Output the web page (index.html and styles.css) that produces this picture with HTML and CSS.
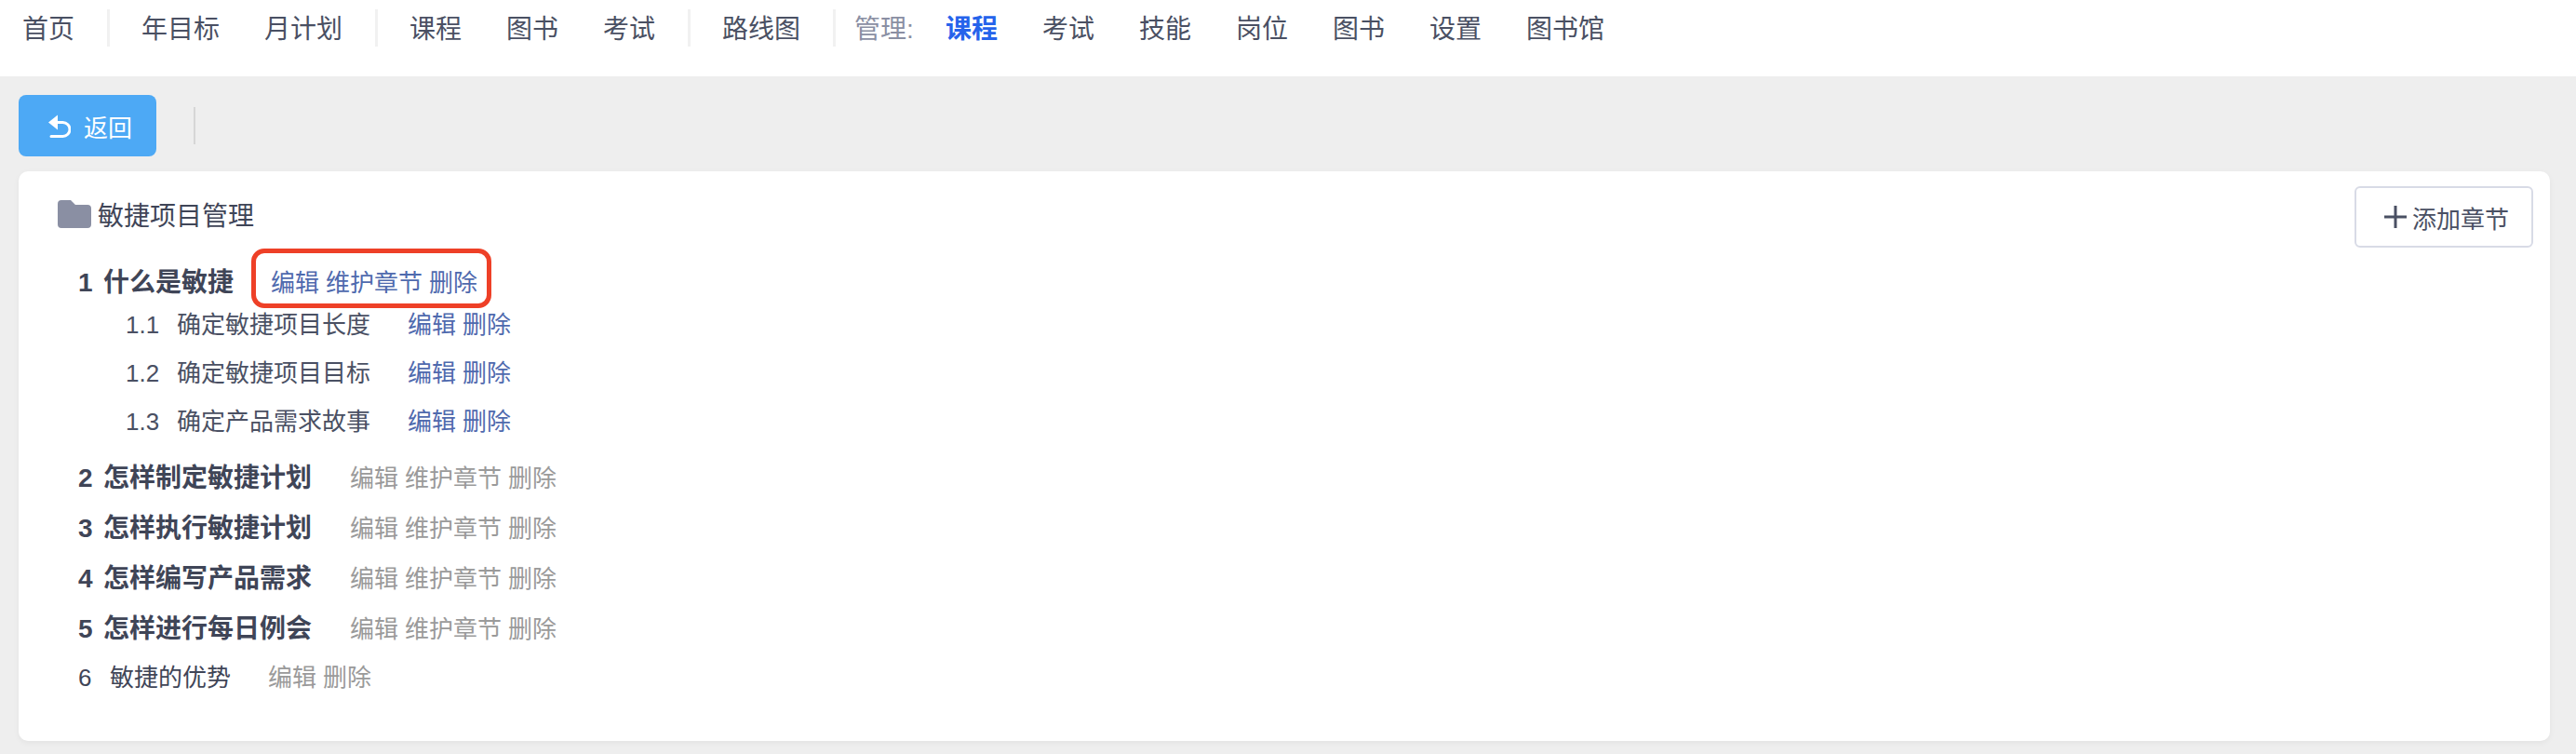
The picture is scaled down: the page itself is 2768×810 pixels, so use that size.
FILE: index.html
```html
<!DOCTYPE html>
<html lang="zh-CN">
<head>
<meta charset="utf-8">
<title>敏捷项目管理</title>
<link rel="stylesheet" href="styles.css">
</head>
<body>
<header class="topnav">
  <a class="nav-item">首页</a>
  <i class="nav-sep"></i>
  <a class="nav-item">年目标</a>
  <a class="nav-item">月计划</a>
  <i class="nav-sep"></i>
  <a class="nav-item">课程</a>
  <a class="nav-item">图书</a>
  <a class="nav-item">考试</a>
  <i class="nav-sep"></i>
  <a class="nav-item">路线图</a>
  <i class="nav-sep"></i>
  <span class="nav-label">管理:</span>
  <a class="nav-item active">课程</a>
  <a class="nav-item">考试</a>
  <a class="nav-item">技能</a>
  <a class="nav-item">岗位</a>
  <a class="nav-item">图书</a>
  <a class="nav-item">设置</a>
  <a class="nav-item">图书馆</a>
</header>

<div class="toolbar">
  <button class="btn-back">
    <svg class="icon-back" viewBox="0 0 24 25" aria-hidden="true">
      <path d="M0 8.5 10 .5v16z" fill="#fff"/>
      <path d="M8 8.5h7.5a7 7 0 0 1 0 15H3" fill="none" stroke="#fff" stroke-width="3" stroke-linecap="round"/>
    </svg>
    <span>返回</span>
  </button>
  <i class="toolbar-sep"></i>
</div>

<main class="card">
  <div class="card-head">
    <div class="course-title">
      <svg class="icon-folder" viewBox="0 0 36 30" aria-hidden="true">
        <path d="M0 4a4 4 0 0 1 4-4h10l5 5h13a4 4 0 0 1 4 4v17a4 4 0 0 1-4 4H4a4 4 0 0 1-4-4z" fill="#8a8fa3"/>
      </svg>
      <span>敏捷项目管理</span>
    </div>
    <button class="btn-add">
      <svg class="icon-plus" viewBox="0 0 24 24" aria-hidden="true">
        <path d="M0 12h24M12 0v24" fill="none" stroke="#4a5063" stroke-width="3"/>
      </svg>
      <span>添加章节</span>
    </button>
  </div>

  <div class="chapter chapter-first">
    <span class="chapter-num">1</span><span class="chapter-name">什么是敏捷</span>
    <span class="links links-on links-marked"><a>编辑</a><a>维护章节</a><a>删除</a></span>
  </div>
  <div class="sections">
    <div class="section">
      <span class="section-num">1.1</span><span class="section-name">确定敏捷项目长度</span>
      <span class="links links-on"><a>编辑</a><a>删除</a></span>
    </div>
    <div class="section">
      <span class="section-num">1.2</span><span class="section-name">确定敏捷项目目标</span>
      <span class="links links-on"><a>编辑</a><a>删除</a></span>
    </div>
    <div class="section">
      <span class="section-num">1.3</span><span class="section-name">确定产品需求故事</span>
      <span class="links links-on"><a>编辑</a><a>删除</a></span>
    </div>
  </div>
  <div class="chapter">
    <span class="chapter-num">2</span><span class="chapter-name">怎样制定敏捷计划</span>
    <span class="links"><a>编辑</a><a>维护章节</a><a>删除</a></span>
  </div>
  <div class="chapter">
    <span class="chapter-num">3</span><span class="chapter-name">怎样执行敏捷计划</span>
    <span class="links"><a>编辑</a><a>维护章节</a><a>删除</a></span>
  </div>
  <div class="chapter">
    <span class="chapter-num">4</span><span class="chapter-name">怎样编写产品需求</span>
    <span class="links"><a>编辑</a><a>维护章节</a><a>删除</a></span>
  </div>
  <div class="chapter">
    <span class="chapter-num">5</span><span class="chapter-name">怎样进行每日例会</span>
    <span class="links"><a>编辑</a><a>维护章节</a><a>删除</a></span>
  </div>
  <div class="chapter chapter-plain">
    <span class="chapter-num">6</span><span class="chapter-name">敏捷的优势</span>
    <span class="links"><a>编辑</a><a>删除</a></span>
  </div>
</main>
</body>
</html>
```

FILE: styles.css
```css
* { box-sizing: border-box; }
html, body { margin: 0; height: 810px; overflow: hidden; }
body {
  background: #eeeeee;
  font-family: "Liberation Sans", "Noto Sans CJK SC", sans-serif;
  color: #4a5063;
}
.topnav {
  display: flex;
  align-items: flex-start;
  height: 82px;
  padding-top: 10px;
  background: #fff;
}
.nav-item {
  padding: 0 24px;
  font-size: 28px;
  line-height: 44px;
  color: #4a5063;
}
.nav-item.active { color: #2563eb; font-weight: 700; }
.nav-sep {
  width: 3px;
  height: 40px;
  margin: 0 10px 0 11px;
  background: #f1f1f1;
}
.nav-label {
  margin-left: 10px;
  padding-right: 10px;
  font-size: 28px;
  line-height: 44px;
  color: #8a8fa3;
}
.toolbar {
  display: flex;
  align-items: center;
  padding: 20px 0 16px 20px;
}
.btn-back {
  display: flex;
  align-items: center;
  gap: 14px;
  width: 148px;
  height: 66px;
  padding: 0 0 0 32px;
  border: 0;
  border-radius: 8px;
  background: #4da9f5;
  color: #fff;
  font: inherit;
  font-size: 26px;
}
.icon-back { width: 24px; height: 25px; }
.toolbar-sep {
  width: 2px;
  height: 40px;
  margin-left: 40px;
  background: #d6d6d6;
}
.card {
  height: 612px;
  margin: 0 28px 0 20px;
  padding: 16px 18px 0 42px;
  border-radius: 10px;
  background: #fff;
  box-shadow: 0 2px 6px rgba(0, 0, 0, 0.05);
}
.card-head {
  display: flex;
  justify-content: space-between;
  align-items: flex-start;
  height: 81px;
}
.course-title {
  display: flex;
  align-items: center;
  gap: 7px;
  height: 60px;
  font-size: 28px;
  color: #3f4557;
}
.icon-folder { width: 36px; height: 30px; }
.btn-add {
  display: flex;
  align-items: center;
  gap: 6px;
  width: 192px;
  height: 66px;
  padding: 0 0 0 30px;
  border: 2px solid #d8dbe6;
  border-radius: 6px;
  background: #fff;
  color: #4a5063;
  font: inherit;
  font-size: 26px;
}
.icon-plus { width: 24px; height: 24px; }
.chapter {
  display: flex;
  align-items: baseline;
  height: 54px;
  margin-left: 22px;
  font-size: 28px;
  line-height: 57px;
  font-weight: 700;
  color: #3f4557;
}
.chapter-first { height: 42px; line-height: 45px; }
.chapter-num { width: 27px; }
.links {
  display: flex;
  gap: 7px;
  margin-left: 41px;
  font-size: 26px;
  font-weight: 400;
  color: #9a9a9a;
}
.links-on { color: #4f6aae; }
.links-marked { position: relative; margin-left: 40px; }
.links-marked::after {
  content: "";
  box-sizing: border-box;
  position: absolute;
  top: -15px;
  left: -21px;
  width: 258px;
  height: 64px;
  border: 5px solid #ee4027;
  border-radius: 14px;
}
.chapter-plain { font-size: 26px; font-weight: 400; line-height: 54px; }
.chapter-plain .chapter-num { width: 34px; }
.chapter-plain .links { margin-left: 40px; }
.sections { margin-bottom: 6px; }
.section {
  display: flex;
  align-items: baseline;
  height: 52px;
  margin-left: 73px;
  font-size: 26px;
  line-height: 52px;
  color: #4a5063;
}
.section-num { width: 55px; }
.section .links { margin-left: 40px; }
```
